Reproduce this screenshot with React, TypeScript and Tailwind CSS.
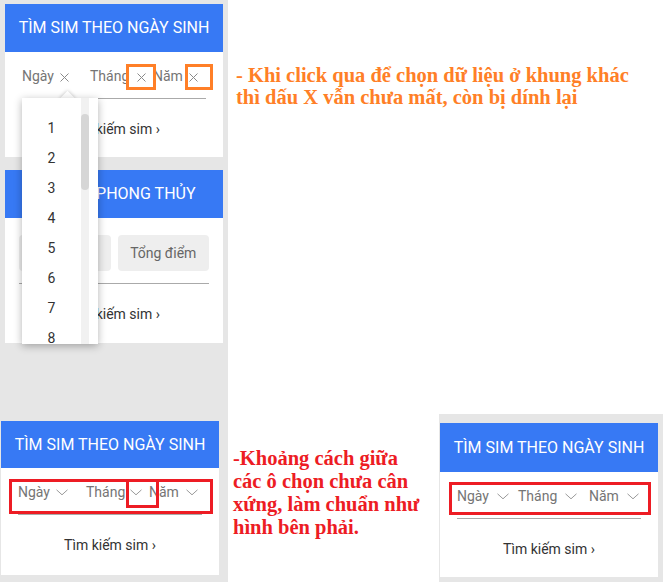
import React from "react";

type Sel = { label: string; w?: number; gap: number };

const SEL_BUG_X: Sel[] = [
  { label: "Ngày", w: 68, gap: 6 },
  { label: "Tháng", w: 63, gap: 8 },
  { label: "Năm", gap: 6 },
];

const SEL_BUG_SPACE: Sel[] = [
  { label: "Ngày", w: 68, gap: 6 },
  { label: "Tháng", w: 63, gap: 5 },
  { label: "Năm", gap: 7 },
];

const SEL_OK: Sel[] = [
  { label: "Ngày", w: 61, gap: 8 },
  { label: "Tháng", w: 71, gap: 8 },
  { label: "Năm", gap: 8 },
];

function Chevron() {
  return (
    <svg width="12" height="7" viewBox="0 0 12 7" className="shrink-0">
      <polyline points="0.5,0.8 6,5.8 11.5,0.8" fill="none" stroke="#9a9a9a" strokeWidth="1" />
    </svg>
  );
}

function Cross() {
  return (
    <svg width="9" height="9" viewBox="0 0 9 9" className="shrink-0 mt-[2px]">
      <path d="M0.5 0.5 L8.5 8.5 M8.5 0.5 L0.5 8.5" stroke="#8a8a8a" strokeWidth="1" />
    </svg>
  );
}

function Header({ text, h }: { text: string; h: string }) {
  return (
    <div className={`${h} bg-[#3779f4] flex items-center justify-center text-white text-[16px] whitespace-nowrap`}>
      {text}
    </div>
  );
}

function SearchLink() {
  return (
    <div className="h-[20px] leading-[20px] text-center text-[14px] text-[#333]">
      Tìm kiếm sim ›
    </div>
  );
}

function NgaySinhWidget({
  sels,
  icon,
  headerH,
  bodyH,
  children,
}: {
  sels: Sel[];
  icon: "x" | "chev";
  headerH: string;
  bodyH: string;
  children?: React.ReactNode;
}) {
  return (
    <div className="w-[218px] font-['Roboto',sans-serif] font-normal">
      <Header text="TÌM SIM THEO NGÀY SINH" h={headerH} />
      <div className={`relative bg-white px-[17px] pt-[14px] ${bodyH}`}>
        <div className="flex items-start h-[33px] border-b border-[#aaaaaa] text-[14px] text-[#757575]">
          {sels.map((s) => (
            <div
              key={s.label}
              className="flex items-center h-[20px] shrink-0"
              style={s.w ? { width: s.w } : undefined}
            >
              <span className="leading-[20px]">{s.label}</span>
              <span style={{ marginLeft: s.gap }} className="flex items-center">
                {icon === "x" ? <Cross /> : <Chevron />}
              </span>
            </div>
          ))}
        </div>
        <div className="mt-[20px]">
          <SearchLink />
        </div>
        {children}
      </div>
    </div>
  );
}

function DayDropdown() {
  const days = [1, 2, 3, 4, 5, 6, 7, 8];
  return (
    <div className="absolute left-[22px] top-[98px] w-[76px] h-[246px] z-20">
      <div className="absolute left-[40px] -top-[5px] w-[11px] h-[11px] rotate-45 bg-white shadow-[0_0_4px_rgba(0,0,0,0.25)]" />
      <div className="relative h-full bg-white shadow-[0_2px_8px_rgba(0,0,0,0.3)] overflow-hidden flex">
        <div className="w-[59px] pt-[15px]">
          {days.map((d) => (
            <div key={d} className="h-[30px] leading-[30px] text-center text-[14px] text-[#333]">
              {d}
            </div>
          ))}
        </div>
        <div className="w-[8px] h-full bg-[#f1f1f1] pt-[16px]">
          <div className="h-[76px] rounded-full bg-[#d6d6d6]" />
        </div>
      </div>
    </div>
  );
}

export default function App() {
  return (
    <div className="flex w-[663px] h-[582px] bg-white overflow-hidden font-['Roboto',sans-serif]">
      <div className="relative w-[228px] h-full shrink-0 bg-[#e6e6e6]">
        <div className="pl-[5px] pt-[4px]">
          <NgaySinhWidget sels={SEL_BUG_X} icon="x" headerH="h-[48px]" bodyH="h-[105px]">
            <div className="absolute left-[121px] top-[12px] w-[30px] h-[26px] border-[3px] border-[#ff7f27]" />
            <div className="absolute left-[180px] top-[12px] w-[28px] h-[26px] border-[3px] border-[#ff7f27]" />
          </NgaySinhWidget>

          <div className="w-[218px] mt-[13px]">
            <Header text="TÌM SIM PHONG THỦY" h="h-[48px]" />
            <div className="bg-white h-[125px] px-[14px] pt-[17px] overflow-hidden">
              <div className="flex gap-[7px] pb-[12px] border-b border-[#aaaaaa]">
                <div className="flex-1 h-[36px] rounded bg-[#eeeeee]" />
                <div className="flex-1 h-[36px] rounded bg-[#eeeeee] flex items-center justify-center text-[14px] text-[#666]">
                  Tổng điểm
                </div>
              </div>
              <div className="mt-[20px]">
                <SearchLink />
              </div>
            </div>
          </div>
        </div>

        <div className="pl-[1px] mt-[78px]">
          <NgaySinhWidget sels={SEL_BUG_SPACE} icon="chev" headerH="h-[47px]" bodyH="h-[107px]">
            <div className="absolute left-[8px] top-[11px] w-[204px] h-[35px] border-[3px] border-[#ed1c24]" />
            <div className="absolute left-[125px] top-[11px] w-[33px] h-[29px] border-[3px] border-[#ed1c24]" />
          </NgaySinhWidget>
        </div>

        <DayDropdown />
      </div>

      <div className="flex-1 flex flex-col font-['Liberation_Serif',serif] font-bold">
        <p className="mt-[64px] ml-[8px] text-[20.5px] leading-[22px] text-[#ff7f27] whitespace-nowrap">
          - Khi click qua để chọn dữ liệu ở khung khác
          <br />
          thì dấu X vẫn chưa mất, còn bị dính lại
        </p>

        <div className="mt-auto flex items-start">
          <p className="w-[206px] ml-[5px] mt-[33px] text-[20.5px] leading-[23px] text-[#ed1c24] whitespace-nowrap">
            -Khoảng cách giữa
            <br />
            các ô chọn chưa cân
            <br />
            xứng, làm chuẩn như
            <br />
            hình bên phải.
          </p>
          <div className="w-[224px] h-[168px] bg-[#e6e6e6] pl-[1px] pt-[9px]">
            <NgaySinhWidget sels={SEL_OK} icon="chev" headerH="h-[49px]" bodyH="h-[105px]">
              <div className="absolute left-[9px] top-[10px] w-[202px] h-[33px] border-[3px] border-[#ed1c24]" />
            </NgaySinhWidget>
          </div>
        </div>
      </div>
    </div>
  );
}
